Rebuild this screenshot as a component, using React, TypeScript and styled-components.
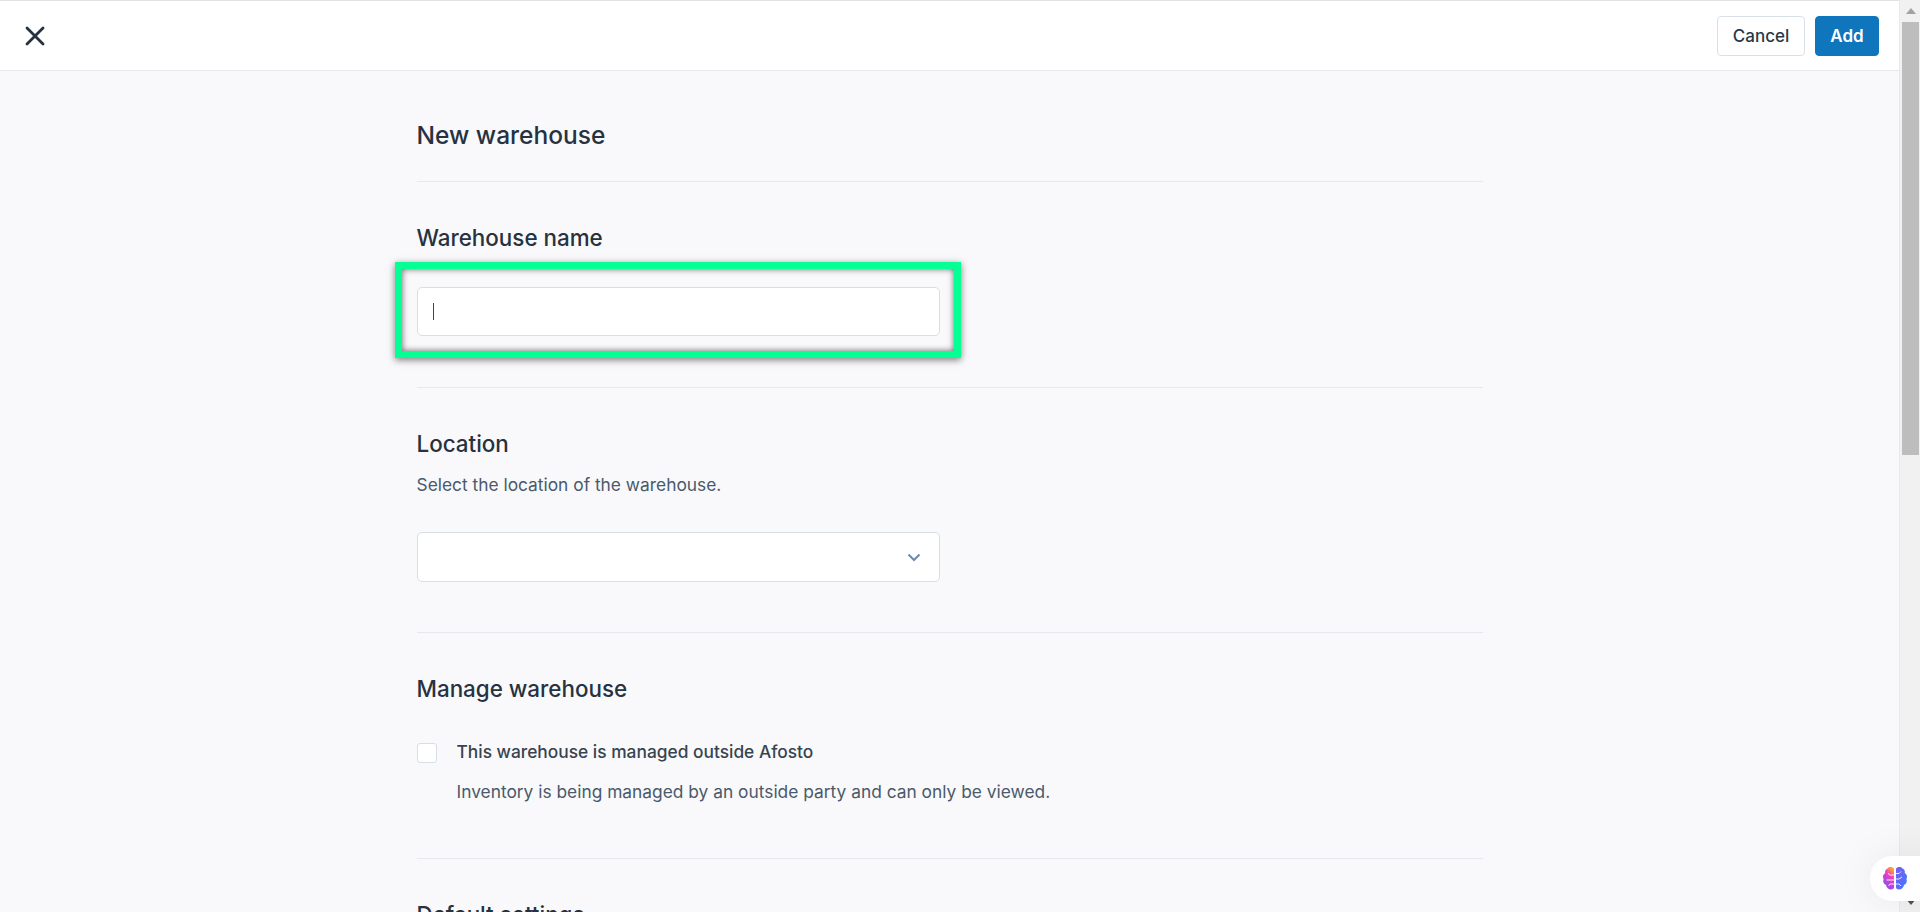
import React from 'react';
import styled, { createGlobalStyle } from 'styled-components';

const Global = createGlobalStyle`
  html, body { margin: 0; padding: 0; height: 912px; overflow: hidden; background: #f9f9fb; }
  #root { height: 912px; }
  * { box-sizing: border-box; }
  body { font-family: Inter, "Liberation Sans", sans-serif; color: #263240; }
`;

const Shell = styled.div`
  display: flex;
  height: 912px;
  overflow: hidden;
  position: relative;
`;
const Page = styled.div`
  flex: 1;
  min-width: 0;
  display: flex;
  flex-direction: column;
`;
const TopBar = styled.header`
  height: 71px;
  flex: none;
  background: #fff;
  border-top: 1px solid #e2e2e2;
  border-bottom: 1px solid #e6e8ee;
  display: flex;
  align-items: center;
  justify-content: space-between;
  padding: 0 20px 0 25px;
`;
const CloseButton = styled.button`
  border: 0;
  background: none;
  padding: 0;
  width: 20px;
  height: 20px;
  display: flex;
`;
const Actions = styled.div`
  display: flex;
  gap: 10px;
`;
const Button = styled.button<{ $primary?: boolean }>`
  height: 40px;
  width: ${p => (p.$primary ? 64 : 88)}px;
  border-radius: 4px;
  font: ${p => (p.$primary ? 600 : 500)} 17px Inter, sans-serif;
  background: ${p => (p.$primary ? '#0f75bc' : '#fff')};
  color: ${p => (p.$primary ? '#fff' : '#2b3844')};
  border: 1px solid ${p => (p.$primary ? '#0f75bc' : '#d8e1ea')};
  padding: 0;
`;
const Main = styled.main`
  width: 1066px;
  margin: 0 auto;
  padding-top: 46px;
`;
const Title = styled.h1`
  margin: 0;
  font-size: 24.5px;
  line-height: 36px;
  font-weight: 500;
  color: #263240;
`;
const Section = styled.section<{ $pad: number }>`
  padding: 41px 0 ${p => p.$pad}px;
  border-top: 1px solid #e6e8ee;
  &:first-of-type { margin-top: 28px; }
`;
const Heading = styled.h2<{ $gap: number }>`
  margin: 0 0 ${p => p.$gap}px;
  font-size: 22.4px;
  line-height: 29px;
  font-weight: 500;
  color: #263240;
`;
const Description = styled.p<{ $gap?: number }>`
  margin: 0 0 ${p => p.$gap ?? 0}px;
  font-size: 17.35px;
  line-height: 26px;
  color: #4a5a6a;
`;
const FieldWrap = styled.div`
  position: relative;
  width: 523px;
`;
const Input = styled.div`
  height: 49px;
  background: #fff;
  border: 1px solid #d6dfe8;
  border-radius: 5px;
  padding: 0 15px;
  display: flex;
  align-items: center;
`;
const Caret = styled.span`
  width: 1px;
  height: 17px;
  background: #3a4652;
`;
const Highlight = styled.div`
  position: absolute;
  left: -22px;
  right: -21px;
  top: -25px;
  bottom: -22px;
  border: 7px solid #05ff94;
  box-shadow: 0 2px 7px rgba(0, 0, 0, 0.5), inset 0 0 6px rgba(0, 0, 0, 0.6);
  pointer-events: none;
`;
const Select = styled.div`
  width: 523px;
  height: 50px;
  background: #fff;
  border: 1px solid #d6dfe8;
  border-radius: 5px;
  display: flex;
  align-items: center;
  justify-content: flex-end;
  padding-right: 18px;
`;
const CheckRow = styled.label`
  display: flex;
  gap: 20px;
`;
const Box = styled.span`
  flex: none;
  width: 20px;
  height: 20px;
  margin-top: 4px;
  background: #fff;
  border: 1px solid #d6dfe8;
  border-radius: 3px;
`;
const CheckText = styled.div`
  display: flex;
  flex-direction: column;
  gap: 14px;
`;
const CheckLabel = styled.div`
  font-size: 17.35px;
  line-height: 26px;
  font-weight: 500;
  color: #37444f;
`;
const Scrollbar = styled.div`
  flex: none;
  width: 21px;
  background: #f1f1f1;
  border-left: 1px solid #e9e9e9;
  display: flex;
  flex-direction: column;
  align-items: center;
  padding-left: 1px;
`;
const ArrowCell = styled.div`
  height: 21px;
  flex: none;
  display: flex;
  align-items: center;
  justify-content: center;
`;
const Track = styled.div`
  flex: 1;
  width: 100%;
  padding: 1px 1px 0;
`;
const Thumb = styled.div`
  height: 433px;
  background: #bdbdbd;
`;
const Pill = styled.button`
  position: absolute;
  left: 1870px;
  top: 856px;
  width: 70px;
  height: 45px;
  border: 0;
  border-radius: 23px;
  background: #fff;
  padding: 0 0 0 12px;
  display: flex;
  align-items: center;
  box-shadow: 0 0 40px rgba(0, 0, 0, 0.07);
`;

const Brain = () => (
  <svg width="26" height="25" viewBox="0 0 26 25" fill="none">
    <defs>
      <linearGradient id="bl" x1="0.7" y1="0" x2="0.2" y2="1">
        <stop offset="0" stopColor="#ffa726" />
        <stop offset="0.35" stopColor="#e93fc0" />
        <stop offset="1" stopColor="#7a4dff" />
      </linearGradient>
      <linearGradient id="br" x1="0" y1="0" x2="1" y2="1">
        <stop offset="0" stopColor="#7a5cf5" />
        <stop offset="1" stopColor="#3f7bff" />
      </linearGradient>
    </defs>
    <path d="M12 2.500C11 .8 7 .2 5.500 2.500 3.500 3 2.800 5 3.200 7 1 8.500.3 11 1.600 13 .6 15 1.500 18 4 19c.4 2.500 2.500 4.500 5 4.500 1.500 0 3-.8 3-2V2.500Z" fill="url(#bl)" />
    <path d="M14 2.500C15 .8 19 .2 20.500 2.500 22.500 3 23.200 5 22.800 7 25 8.500 25.700 11 24.400 13 25.400 15 24.500 18 22 19c-.4 2.500-2.500 4.500-5 4.500-1.500 0-3-.8-3-2V2.500Z" fill="url(#br)" />
    <path d="M12 9H7.500L6 7M12 14H4.500M12 18H8l-1.500 2M14 7.500h3l2-2M14 13h3l3-2M14 18h3l2 2" stroke="#fff" strokeWidth="1" opacity=".85" />
  </svg>
);

export default function App() {
  return (
    <Shell>
      <Global />
      <Page>
        <TopBar>
          <CloseButton aria-label="Close">
            <svg width="20" height="20" viewBox="0 0 20 20" fill="none">
              <path d="M2 2l16 16M18 2L2 18" stroke="#243240" strokeWidth="2.800" strokeLinecap="round" />
            </svg>
          </CloseButton>
          <Actions>
            <Button>Cancel</Button>
            <Button $primary>Add</Button>
          </Actions>
        </TopBar>
        <Main>
          <Title>New warehouse</Title>
          <Section $pad={51}>
            <Heading $gap={35}>Warehouse name</Heading>
            <FieldWrap>
              <Input><Caret /></Input>
              <Highlight />
            </FieldWrap>
          </Section>
          <Section $pad={50}>
            <Heading $gap={14}>Location</Heading>
            <Description $gap={34}>Select the location of the warehouse.</Description>
            <Select>
              <svg width="14" height="9" viewBox="0 0 14 9" fill="none">
                <path d="M1.500 1.500L7 7l5.500-5.500" stroke="#6b8bad" strokeWidth="2" />
              </svg>
            </Select>
          </Section>
          <Section $pad={53}>
            <Heading $gap={36}>Manage warehouse</Heading>
            <CheckRow>
              <Box />
              <CheckText>
                <CheckLabel>This warehouse is managed outside Afosto</CheckLabel>
                <Description>Inventory is being managed by an outside party and can only be viewed.</Description>
              </CheckText>
            </CheckRow>
          </Section>
          <Section $pad={40}>
            <Heading $gap={0}>Default settings</Heading>
          </Section>
        </Main>
      </Page>
      <Scrollbar>
        <ArrowCell>
          <svg width="10" height="6" viewBox="0 0 10 6"><path d="M5 0l5 6H0z" fill="#a3a3a3" /></svg>
        </ArrowCell>
        <Track><Thumb /></Track>
        <ArrowCell>
          <svg width="10" height="6" viewBox="0 0 10 6"><path d="M5 6l5-6H0z" fill="#505050" /></svg>
        </ArrowCell>
      </Scrollbar>
      <Pill aria-label="Assistant"><Brain /></Pill>
    </Shell>
  );
}
